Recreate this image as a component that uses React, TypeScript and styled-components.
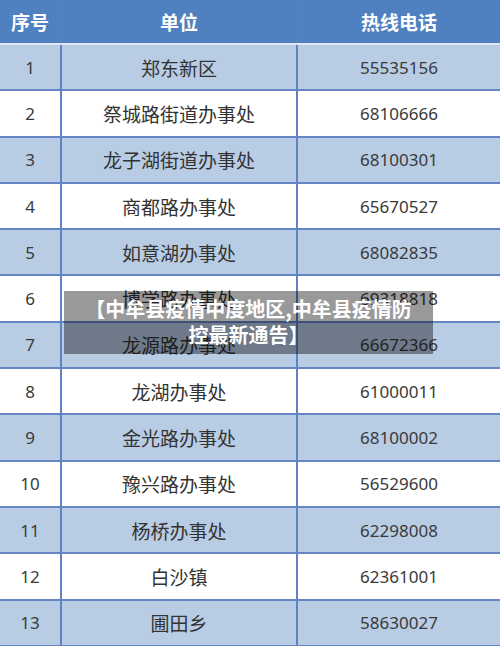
import React from "react";
import styled, { createGlobalStyle } from "styled-components";

const rows = [
  ["1", "郑东新区", "55535156"],
  ["2", "祭城路街道办事处", "68106666"],
  ["3", "龙子湖街道办事处", "68100301"],
  ["4", "商都路办事处", "65670527"],
  ["5", "如意湖办事处", "68082835"],
  ["6", "博学路办事处", "69318818"],
  ["7", "龙源路办事处", "66672366"],
  ["8", "龙湖办事处", "61000011"],
  ["9", "金光路办事处", "68100002"],
  ["10", "豫兴路办事处", "56529600"],
  ["11", "杨桥办事处", "62298008"],
  ["12", "白沙镇", "62361001"],
  ["13", "圃田乡", "58630027"],
];

const GlobalStyle = createGlobalStyle`
  html, body {
    margin: 0;
    padding: 0;
    background: #ffffff;
    overflow: hidden;
  }
  body {
    font-family: "Noto Sans CJK SC", "Noto Sans", sans-serif;
  }
`;

const Page = styled.div`
  position: relative;
  width: 500px;
  height: 646px;
  overflow: hidden;
`;

const Grid = styled.div`
  display: grid;
  grid-template-columns: 60px 2px 234px 2px 202px;
`;

const HeaderRow = styled.div`
  display: contents;
`;

const HeadCell = styled.div`
  height: 43px;
  display: flex;
  align-items: center;
  justify-content: center;
  background: #4f80bf;
  color: #ffffff;
  font-size: 19px;
  font-weight: 700;
  border-bottom: 2px solid #dbe7f5;
`;

const HeadDivider = styled.div`
  background: #5482c0;
  border-bottom: 2px solid #dbe7f5;
`;

const Cell = styled.div<{ $shade: boolean }>`
  height: 44.3px;
  display: flex;
  align-items: center;
  justify-content: center;
  background: ${(p) => (p.$shade ? "#b8cce4" : "#ffffff")};
  color: #333333;
  font-size: 19px;
  border-bottom: 2px solid #6685c4;
`;

const NumCell = styled(Cell)`
  font-size: 17px;
  font-family: "Noto Sans", "Noto Sans CJK SC", sans-serif;
  color: #3a3a3a;
`;

const Divider = styled.div`
  background: #5f82c4;
  border-bottom: 2px solid #6685c4;
`;

const Overlay = styled.div`
  position: absolute;
  left: 64px;
  top: 291px;
  width: 369px;
  height: 63px;
  background: rgba(0, 0, 0, 0.4);
  color: #ffffff;
  font-size: 20px;
  font-weight: 700;
  line-height: 26px;
  text-align: center;
  display: flex;
  flex-direction: column;
  justify-content: center;
  padding-bottom: 2px;
  box-sizing: border-box;
  white-space: nowrap;
`;

export default function App() {
  return (
    <Page>
      <GlobalStyle />
      <Grid>
        <HeaderRow>
          <HeadCell>序号</HeadCell>
          <HeadDivider />
          <HeadCell>单位</HeadCell>
          <HeadDivider />
          <HeadCell>热线电话</HeadCell>
        </HeaderRow>
        {rows.map(([n, name, tel], i) => (
          <React.Fragment key={n}>
            <NumCell $shade={i % 2 === 0}>{n}</NumCell>
            <Divider />
            <Cell $shade={i % 2 === 0}>{name}</Cell>
            <Divider />
            <NumCell $shade={i % 2 === 0}>{tel}</NumCell>
          </React.Fragment>
        ))}
      </Grid>
      <Overlay>
        <div>【中牟县疫情中度地区,中牟县疫情防</div>
        <div>控最新通告】</div>
      </Overlay>
    </Page>
  );
}
